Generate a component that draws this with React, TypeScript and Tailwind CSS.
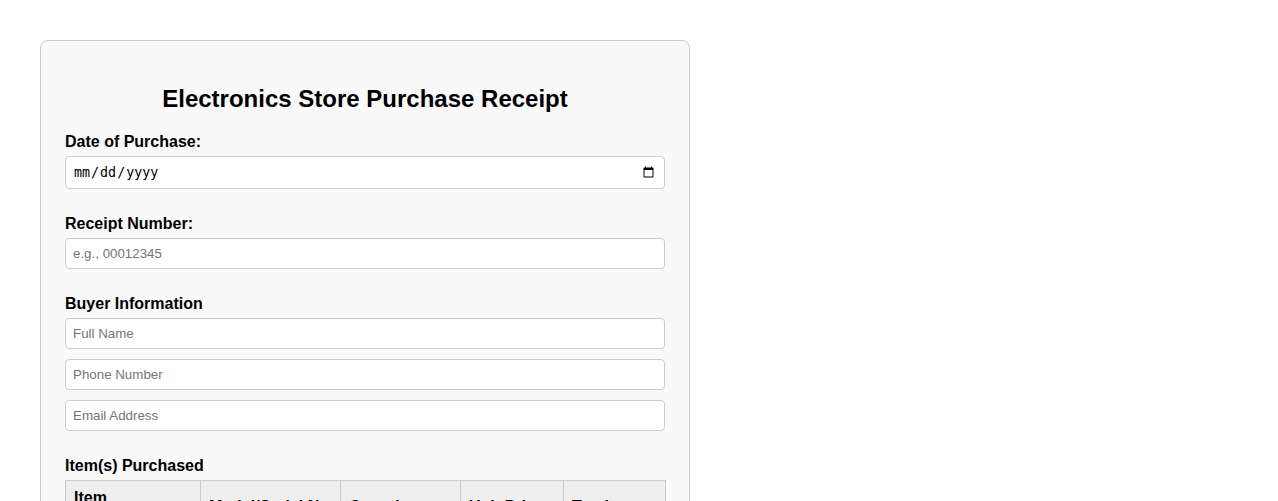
import { useState } from "react";

const fieldClass =
  "block h-[31px] w-full rounded border border-[#ccc] bg-white px-[7px] text-[13.333px] text-black placeholder:text-[#757575] focus:outline-none";

const labelClass = "mb-[5px] block text-base font-bold leading-[18px] text-black";

const columns = [
  { label: "Item Description", width: "w-[135px]" },
  { label: "Model/Serial No.", width: "w-[140px] whitespace-nowrap" },
  { label: "Quantity", width: "w-[120px] whitespace-nowrap" },
  { label: "Unit Price", width: "w-[103px] whitespace-nowrap" },
  { label: "Total", width: "w-[102px] whitespace-nowrap" },
];

const App = () => {
  const [purchaseDate, setPurchaseDate] = useState("");

  return (
    <div className="min-h-screen bg-white p-[40px] font-['Liberation_Sans',Arial,sans-serif] text-black">
      <form className="w-[650px] rounded-lg border border-[#ccc] bg-[#f9f9f9] px-[24px] pb-[24px] pt-[44px]">
        <h2 className="mb-[20px] text-center text-2xl font-bold leading-[28px]">
          Electronics Store Purchase Receipt
        </h2>

        <div className="mb-[26px]">
          <label className={labelClass} htmlFor="purchase-date">
            Date of Purchase:
          </label>
          <input
            id="purchase-date"
            type="date"
            value={purchaseDate}
            onChange={(event) => setPurchaseDate(event.target.value)}
            className="block h-[33px] w-full rounded border border-[#ccc] bg-white px-[7px] font-['DejaVu_Sans_Mono',monospace] text-[13.333px] text-black focus:outline-none"
          />
        </div>

        <div className="mb-[26px]">
          <label className={labelClass} htmlFor="receipt-number">
            Receipt Number:
          </label>
          <input id="receipt-number" type="text" placeholder="e.g., 00012345" className={fieldClass} />
        </div>

        <div className="mb-[26px]">
          <p className={labelClass}>Buyer Information</p>
          <div className="flex flex-col gap-[10px]">
            <input type="text" placeholder="Full Name" className={fieldClass} />
            <input type="tel" placeholder="Phone Number" className={fieldClass} />
            <input type="email" placeholder="Email Address" className={fieldClass} />
          </div>
        </div>

        <div className="mb-[26px]">
          <p className={labelClass}>Item(s) Purchased</p>
          <table className="w-full table-fixed border-collapse">
            <thead>
              <tr>
                {columns.map((column) => (
                  <th
                    key={column.label}
                    className={`${column.width} border border-[#ccc] bg-[#eee] p-[8px] text-left align-middle text-base font-bold leading-[18px]`}
                  >
                    {column.label}
                  </th>
                ))}
              </tr>
            </thead>
            <tbody>
              <tr>
                {columns.map((column) => (
                  <td key={column.label} className="border border-[#ccc] bg-white p-[8px]">
                    <input type="text" className={fieldClass} />
                  </td>
                ))}
              </tr>
            </tbody>
          </table>
        </div>

        <div>
          <label className={labelClass} htmlFor="grand-total">
            Grand Total:
          </label>
          <input id="grand-total" type="text" placeholder="$0.00" className={fieldClass} />
        </div>
      </form>
    </div>
  );
};

export default App;
